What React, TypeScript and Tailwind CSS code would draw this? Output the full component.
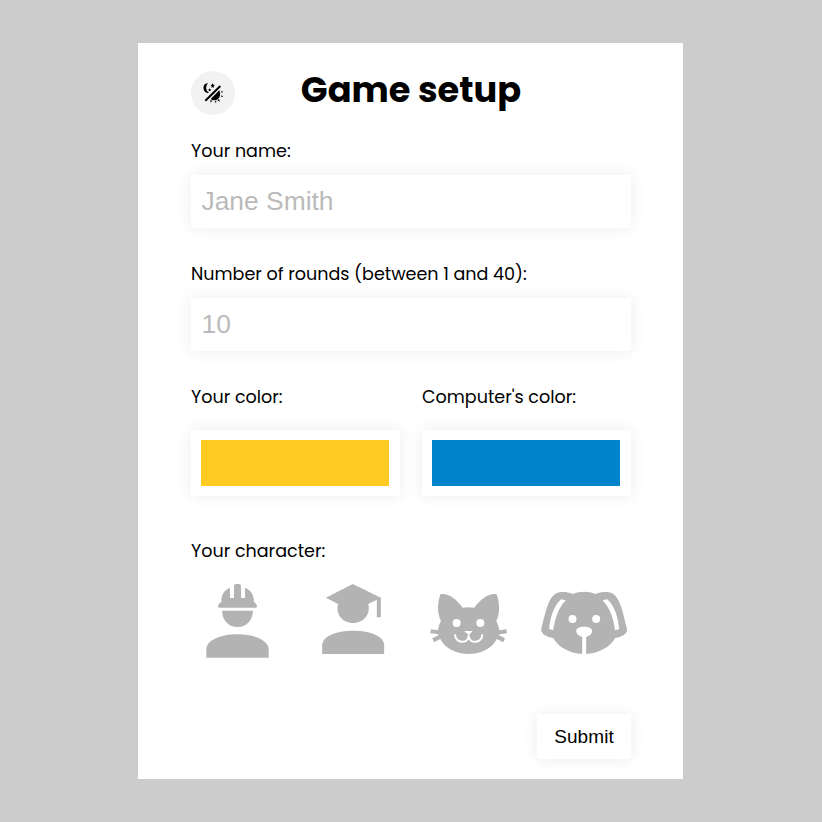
import React from "react";

const labelClass =
  "block h-6 whitespace-nowrap font-['Poppins','Inter',sans-serif] text-[17.55px] leading-6 text-black";
const fieldClass =
  "block h-[53px] w-full bg-white pl-[10.5px] pr-[11px] font-['Liberation_Sans',Arial,sans-serif] text-[26.4px] text-black shadow-[0_0_15px_rgba(0,0,0,0.08)] outline-none placeholder:text-[#bababa]";

function ThemeIcon() {
  return (
    <svg viewBox="0 0 132 132" className="size-11">
      <g fill="#000">
        <path d="M51 37C41 36 36 45 38 55C40 63 46 68 54 65C45 61 42 46 51 37Z" />
        <path d="M65 36l2 5 5 1-4 3 1 6-4-3-4 3 1-6-4-3 5-1z" />
        <path d="M56 52l1.500 3 3 .5-2 2 .5 3-3-1.500-3 1.500.5-3-2-2 3-.5z" />
        <path d="M85 58C90 69 87 83 76 87C70 89 64 88 59 84Z" />
        <path d="M89 62l6-2-1 6zM91 73l6 3-6 3zM84 84l3 8-8-4zM71 90l6 1-3 5zM58 87l6 2-5 6z" />
      </g>
      <path d="M43 89L88 45" stroke="#000" strokeWidth="6" />
    </svg>
  );
}

function Worker() {
  return (
    <svg viewBox="-12 0 280.5 270" className="h-[90px] w-full" fill="#b3b3b3">
      <path d="M117 33Q117 27 123 27H132Q138 27 138 33V69H150V38C168 45 176 58 177 80Q184 86 186 93Q187 98 182 98H73Q68 98 69 93Q71 86 79 80C79 58 88 45 105 38V69H117Z" />
      <path d="M81 107H174C173 136 154 156 128 156C101 156 82 136 81 107Z" />
      <path d="M34 248V223C34 196 76 178 128 178C180 178 221 196 221 223V248Z" />
    </svg>
  );
}

function Graduate() {
  return (
    <svg viewBox="-9.5 0 280.5 270" className="h-[90px] w-full" fill="#b3b3b3">
      <path d="M47 68L128 27L212 68V127H200V74L174 87C183 117 160 144 129 144C97 144 75 117 84 87Z" />
      <path d="M36 237V211C36 184 78 167 129 167C181 167 222 184 222 211V237Z" />
    </svg>
  );
}

function Cat() {
  return (
    <svg viewBox="-3 -15 280.5 270" className="h-[90px] w-full">
      <path
        fill="#b3b3b3"
        d="M52 43C72 38 98 54 119 83C130 81 143 81 154 83C175 54 201 38 221 43C229 68 233 97 220 123C224 132 228 141 229 151L250 148L252 160L229 163L228 166L246 175L241 187L221 177C207 206 174 222 137 222C100 222 67 206 52 177L33 187L28 175L46 166L44 162L22 160L24 148L45 151C46 141 49 132 54 123C41 97 44 68 52 43Z"
      />
      <circle cx="101" cy="129" r="12" fill="#fff" />
      <circle cx="172" cy="129" r="12" fill="#fff" />
      <path d="M124 153H149L137 166Z" fill="#fff" />
      <path
        d="M96 163C96 191 137 194 137 166C137 194 178 191 178 163"
        fill="none"
        stroke="#fff"
        strokeWidth="6"
      />
    </svg>
  );
}

function Dog() {
  return (
    <svg viewBox="8.5 -15 280.5 270" className="h-[90px] w-full">
      <path
        fill="#b3b3b3"
        d="M113 42C134 33 160 33 181 42C199 35 222 34 234 42C257 57 266 110 276 149C275 163 259 170 240 174C225 202 191 219 153 222V170C162 169 171 161 171 153C171 144 160 140 147 140C134 140 123 144 123 153C123 161 132 169 141 170V222C103 219 69 202 54 174C35 170 19 163 18 149C28 110 37 57 60 42C72 34 95 35 113 42Z"
      />
      <g fill="#fff">
        <circle cx="112" cy="117" r="12" />
        <circle cx="183" cy="117" r="12" />
        <path d="M78 58L92 61C67 86 60 118 54 151L42 147C45 115 54 79 78 58Z" />
        <path d="M216 58L202 61C227 86 234 118 240 151L252 147C249 115 240 79 216 58Z" />
      </g>
    </svg>
  );
}

export default function App() {
  return (
    <main className="flex h-[822px] justify-center bg-[#cccccc] pr-px pt-[43px]">
      <form className="h-[736px] w-[545px] bg-white pl-[53px] pr-[52px] pt-7">
        <header className="grid h-[68px] grid-cols-[44px_1fr_44px] items-start">
          <button type="button" aria-label="Toggle theme" className="size-11 rounded-full bg-[#f2f2f2]">
            <ThemeIcon />
          </button>
          <h1 className="whitespace-nowrap text-center font-['Poppins','Inter',sans-serif] text-[35.2px] font-bold leading-[37px] text-black">
            Game setup
          </h1>
        </header>

        <div className="h-[123px]">
          <label className={labelClass} htmlFor="name">Your name:</label>
          <input id="name" placeholder="Jane Smith" className={"mt-3 " + fieldClass} />
        </div>
        <div className="h-[123px]">
          <label className={labelClass} htmlFor="rounds">Number of rounds (between 1 and 40):</label>
          <input id="rounds" placeholder="10" className={"mt-3 " + fieldClass} />
        </div>

        <div className="grid h-[154px] grid-cols-2 gap-[22px]">
          <div>
            <span className={labelClass}>Your color:</span>
            <div className="mt-[21px] h-[66px] bg-white py-[10px] pl-[10px] pr-[11px] shadow-[0_0_15px_rgba(0,0,0,0.08)]">
              <div className="h-full bg-[#ffca22]" />
            </div>
          </div>
          <div>
            <span className={labelClass}>Computer's color:</span>
            <div className="mt-[21px] h-[66px] bg-white py-[10px] pl-[10px] pr-[11px] shadow-[0_0_15px_rgba(0,0,0,0.08)]">
              <div className="h-full bg-[#0084cc]" />
            </div>
          </div>
        </div>

        <span className={labelClass}>Your character:</span>
        <div className="mt-3 grid h-[90px] grid-cols-4 gap-[22px]">
          <Worker />
          <Graduate />
          <Cat />
          <Dog />
        </div>
        <div className="mt-[49px] flex justify-end">
          <button
            type="button"
            className="h-[45px] w-[94px] bg-white pt-0.5 font-['Liberation_Sans',Arial,sans-serif] text-[19px] tracking-[0.1px] text-black shadow-[0_0_15px_rgba(0,0,0,0.08)]"
          >
            Submit
          </button>
        </div>
      </form>
    </main>
  );
}
